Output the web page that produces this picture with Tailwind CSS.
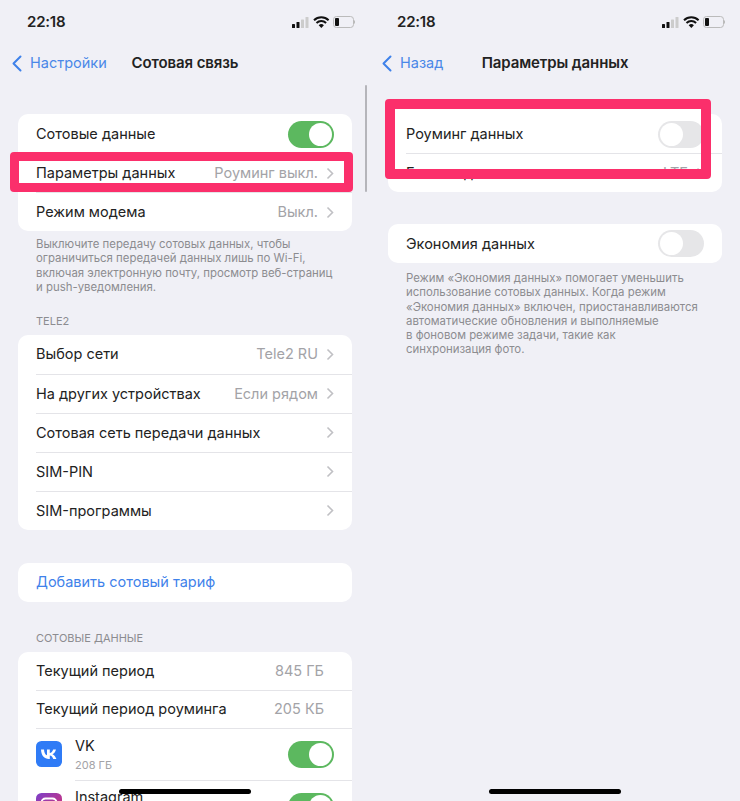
<!DOCTYPE html>
<html lang="ru">
<head>
    <meta charset="UTF-8">
    <meta name="viewport" content="width=device-width, initial-scale=1.0">
    <title>Сотовая связь</title>
    <script src="https://cdn.jsdelivr.net/npm/@tailwindcss/browser@4"></script>
</head>
<body class="bg-[#f0f0f6] font-['Inter','Liberation_Sans',sans-serif] text-[#222] w-[740px] h-[801px] overflow-hidden">
<div class="grid grid-cols-2 h-[801px] overflow-hidden">

    <!-- left phone -->
    <section class="relative h-[801px] overflow-hidden">
        <div class="flex justify-between items-center h-[44px] pl-[27px] pr-[15px]">
            <span class="text-[15px] font-semibold tracking-[-0.2px]">22:18</span>
            <svg width="64" height="14" viewBox="0 0 64 14">
                <rect x="1" y="9" width="3" height="4" rx="0.6" fill="#111"/>
                <rect x="5.5" y="7" width="3" height="6" rx="0.6" fill="#111"/>
                <rect x="10" y="4.5" width="3" height="8.5" rx="0.6" fill="#ccc"/>
                <rect x="14.5" y="2" width="3" height="11" rx="0.6" fill="#ccc"/>
                <path d="M23 5.2a10.5 10.5 0 0 1 14.6 0M25.5 8a7 7 0 0 1 9.6 0" fill="none" stroke="#111" stroke-width="2"/>
                <path d="M27.7 10.3a3.7 3.7 0 0 1 5.2 0L30.3 13z" fill="#111"/>
                <rect x="42.5" y="1.5" width="20" height="11" rx="3" fill="none" stroke="#bbb"/>
                <rect x="44" y="3" width="4" height="8" rx="1" fill="#111"/>
                <path d="M63.5 5.5v3" stroke="#bbb" stroke-width="1.5"/>
            </svg>
        </div>
        <div class="grid grid-cols-[1fr_auto_1fr] items-center h-[36px] pt-[2px]">
            <div class="flex items-center pl-[12px] gap-[8px] text-[14.5px] text-[#4a88e8]">
                <svg width="10" height="17" viewBox="0 0 10 17"><path d="M8.5 1.5 1.5 8.5l7 7" fill="none" stroke="#3f82ea" stroke-width="2" stroke-linecap="round" stroke-linejoin="round"/></svg>
                <span>Настройки</span>
            </div>
            <div class="text-[15px] font-semibold tracking-[-0.1px]">Сотовая связь</div>
            <div></div>
        </div>

        <div class="mt-[34px] mx-[18px] bg-white rounded-[10px]">
            <div class="flex justify-between items-center h-[39px] pl-[18px] pr-[18px] pt-[1px] text-[14.5px]">
                <span>Сотовые данные</span>
                <span class="flex justify-end w-[46px] h-[27px] rounded-full bg-[#5cb85f] p-[2px]"><span class="w-[23px] h-[23px] rounded-full bg-white"></span></span>
            </div>
            <div class="flex justify-between items-center h-[39px] ml-[18px] pr-[18px] border-t border-[#e4e4e8] text-[14.5px]">
                <span>Параметры данных</span>
                <span class="flex items-center gap-[8px] text-[#a3a3a7] text-[14.5px]">Роуминг выкл.
                    <svg width="8" height="13" viewBox="0 0 8 13"><path d="m1.5 1.5 5 5-5 5" fill="none" stroke="#c0c0c4" stroke-width="1.6"/></svg>
                </span>
            </div>
            <div class="flex justify-between items-center h-[39px] ml-[18px] pr-[18px] border-t border-[#e4e4e8] text-[14.5px]">
                <span>Режим модема</span>
                <span class="flex items-center gap-[8px] text-[#a3a3a7] text-[14.5px]">Выкл.
                    <svg width="8" height="13" viewBox="0 0 8 13"><path d="m1.5 1.5 5 5-5 5" fill="none" stroke="#c0c0c4" stroke-width="1.6"/></svg>
                </span>
            </div>
        </div>
        <p class="mt-[6px] mx-[36px] text-[11.4px] leading-[14.4px] text-[#8c8c90]">Выключите передачу сотовых данных, чтобы<br>ограничиться передачей данных лишь по Wi-Fi,<br>включая электронную почту, просмотр веб-страниц<br>и push-уведомления.</p>

        <h3 class="mt-[19px] ml-[36px] text-[11px] leading-[14px] text-[#8c8c90]">TELE2</h3>
        <div class="mt-[7px] mx-[18px] bg-white rounded-[10px]">
            <div class="flex justify-between items-center h-[39px] ml-[18px] pr-[18px] text-[14.5px]">
                <span>Выбор сети</span>
                <span class="flex items-center gap-[8px] text-[#a3a3a7] text-[14.5px]">Tele2 RU
                    <svg width="8" height="13" viewBox="0 0 8 13"><path d="m1.5 1.5 5 5-5 5" fill="none" stroke="#c0c0c4" stroke-width="1.6"/></svg>
                </span>
            </div>
            <div class="flex justify-between items-center h-[39px] ml-[18px] pr-[18px] border-t border-[#e4e4e8] text-[14.5px]">
                <span>На других устройствах</span>
                <span class="flex items-center gap-[8px] text-[#a3a3a7] text-[14.5px]">Если рядом
                    <svg width="8" height="13" viewBox="0 0 8 13"><path d="m1.5 1.5 5 5-5 5" fill="none" stroke="#c0c0c4" stroke-width="1.6"/></svg>
                </span>
            </div>
            <div class="flex justify-between items-center h-[39px] ml-[18px] pr-[18px] border-t border-[#e4e4e8] text-[14.5px]">
                <span>Сотовая сеть передачи данных</span>
                <svg width="8" height="13" viewBox="0 0 8 13"><path d="m1.5 1.5 5 5-5 5" fill="none" stroke="#c0c0c4" stroke-width="1.6"/></svg>
            </div>
            <div class="flex justify-between items-center h-[39px] ml-[18px] pr-[18px] border-t border-[#e4e4e8] text-[14.5px]">
                <span>SIM-PIN</span>
                <svg width="8" height="13" viewBox="0 0 8 13"><path d="m1.5 1.5 5 5-5 5" fill="none" stroke="#c0c0c4" stroke-width="1.6"/></svg>
            </div>
            <div class="flex justify-between items-center h-[39px] ml-[18px] pr-[18px] border-t border-[#e4e4e8] text-[14.5px]">
                <span>SIM-программы</span>
                <svg width="8" height="13" viewBox="0 0 8 13"><path d="m1.5 1.5 5 5-5 5" fill="none" stroke="#c0c0c4" stroke-width="1.6"/></svg>
            </div>
        </div>

        <div class="mt-[33px] mx-[18px] bg-white rounded-[10px] flex items-center h-[39px] pl-[18px] text-[14.5px] text-[#3f82ea]">Добавить сотовый тариф</div>

        <h3 class="mt-[29px] ml-[36px] text-[11px] leading-[14px] text-[#8c8c90]">СОТОВЫЕ ДАННЫЕ</h3>
        <div class="mt-[7px] mx-[18px] bg-white rounded-t-[10px]">
            <div class="flex justify-between items-center h-[38px] ml-[18px] pr-[28px] text-[14.5px]">
                <span>Текущий период</span>
                <span class="text-[#a3a3a7] text-[14.5px]">845 ГБ</span>
            </div>
            <div class="flex justify-between items-center h-[38px] ml-[18px] pr-[28px] border-t border-[#e4e4e8] text-[14.5px]">
                <span>Текущий период роуминга</span>
                <span class="text-[#a3a3a7] text-[14.5px]">205 КБ</span>
            </div>
            <div class="flex items-center h-[52px] ml-[18px] pr-[18px] border-t border-[#e4e4e8]">
                <svg width="26" height="26" viewBox="0 0 26 26" class="shrink-0">
                    <rect width="26" height="26" rx="5.5" fill="#2f7bf6"/>
                    <path d="M5 8.5h3c.2 3.4 1.4 5.300 3 5.800V8.500h2.800v3.500c1.500-.2 2.800-1.600 3.400-3.500H20c-.5 2.200-1.900 4-3.500 4.800 1.700.7 3.100 2.500 3.900 4.700h-3.100c-.6-1.800-1.900-3.200-3.500-3.400V18H13C8.200 18 5.300 14.500 5 8.500z" fill="#fff"/>
                </svg>
                <div class="ml-[13px] flex-1">
                    <div class="text-[14.5px] leading-[18px]">VK</div>
                    <div class="text-[11px] leading-[14px] mt-[3px] text-[#a3a3a7]">208 ГБ</div>
                </div>
                <span class="flex justify-end w-[46px] h-[27px] rounded-full bg-[#5cb85f] p-[2px]"><span class="w-[23px] h-[23px] rounded-full bg-white"></span></span>
            </div>
            <div class="flex items-start h-[52px] ml-[18px] pr-[18px] pt-[8px] relative">
                <span class="absolute left-[39px] right-0 top-0 border-t border-[#e4e4e8]"></span>
                <svg width="26" height="26" viewBox="0 0 26 26" class="shrink-0 mt-[5px]">
                    <defs><linearGradient id="ig" x1="0" y1="0" x2="1" y2="1"><stop offset="0" stop-color="#7b3fc9"/><stop offset="1" stop-color="#e1306c"/></linearGradient></defs>
                    <rect width="26" height="26" rx="5.5" fill="url(#ig)"/>
                    <rect x="5.500" y="5.500" width="15" height="15" rx="4" fill="none" stroke="#fff" stroke-width="1.800"/>
                </svg>
                <div class="ml-[13px] flex-1 text-[14.5px] leading-[18px]">Instagram</div>
                <span class="flex justify-end w-[46px] h-[27px] rounded-full bg-[#5cb85f] p-[2px] mt-[5px]"><span class="w-[23px] h-[23px] rounded-full bg-white"></span></span>
            </div>
        </div>

        <!-- pink highlight -->
        <div class="absolute left-[10px] top-[152px] w-[343px] h-[40px] border-y-[9px] border-x-[9px] border-[#fb2f6b] rounded-[4px]"></div>
        <!-- scrollbar -->
        <div class="absolute left-[365px] top-[85px] w-[2px] h-[107px] bg-[#b5b5ba] rounded-full"></div>
        <!-- home indicator -->
        <div class="absolute left-[119px] top-[789px] w-[132px] h-[5px] bg-black rounded-full"></div>
    </section>

    <!-- right phone -->
    <section class="relative h-[801px] overflow-hidden">
        <div class="flex justify-between items-center h-[44px] pl-[27px] pr-[15px]">
            <span class="text-[15px] font-semibold tracking-[-0.2px]">22:18</span>
            <svg width="64" height="14" viewBox="0 0 64 14">
                <rect x="1" y="9" width="3" height="4" rx="0.6" fill="#111"/>
                <rect x="5.5" y="7" width="3" height="6" rx="0.6" fill="#111"/>
                <rect x="10" y="4.5" width="3" height="8.5" rx="0.6" fill="#ccc"/>
                <rect x="14.5" y="2" width="3" height="11" rx="0.6" fill="#ccc"/>
                <path d="M23 5.2a10.5 10.5 0 0 1 14.6 0M25.5 8a7 7 0 0 1 9.6 0" fill="none" stroke="#111" stroke-width="2"/>
                <path d="M27.7 10.3a3.7 3.7 0 0 1 5.2 0L30.3 13z" fill="#111"/>
                <rect x="42.5" y="1.5" width="20" height="11" rx="3" fill="none" stroke="#bbb"/>
                <rect x="44" y="3" width="4" height="8" rx="1" fill="#111"/>
                <path d="M63.5 5.5v3" stroke="#bbb" stroke-width="1.5"/>
            </svg>
        </div>
        <div class="grid grid-cols-[1fr_auto_1fr] items-center h-[36px] pt-[2px]">
            <div class="flex items-center pl-[12px] gap-[8px] text-[14.5px] text-[#4a88e8]">
                <svg width="10" height="17" viewBox="0 0 10 17"><path d="M8.5 1.5 1.5 8.500l7 7" fill="none" stroke="#3f82ea" stroke-width="2" stroke-linecap="round" stroke-linejoin="round"/></svg>
                <span>Назад</span>
            </div>
            <div class="text-[15px] font-semibold tracking-[-0.1px]">Параметры данных</div>
            <div></div>
        </div>

        <div class="relative mt-[34px] mx-[18px] bg-white rounded-[10px]">
            <div class="absolute top-[-5px] left-[6px] w-[307px] h-[6px] bg-white"></div>
            <div class="relative flex justify-between items-center h-[39px] pl-[18px] pr-[18px] pt-[1px] text-[14.5px]">
                <span>Роуминг данных</span>
                <span class="flex w-[46px] h-[27px] rounded-full bg-[#e6e6e8] p-[2px]"><span class="w-[23px] h-[23px] rounded-full bg-white"></span></span>
            </div>
            <div class="flex justify-between items-center h-[39px] ml-[18px] pr-[18px] border-t border-[#e4e4e8] text-[14.5px]">
                <span>Голос и данные</span>
                <span class="flex items-center gap-[8px] text-[#a3a3a7] text-[14.5px]">LTE
                    <svg width="8" height="13" viewBox="0 0 8 13"><path d="m1.5 1.500 5 5-5 5" fill="none" stroke="#c0c0c4" stroke-width="1.6"/></svg>
                </span>
            </div>
        </div>

        <div class="mt-[32px] mx-[18px] bg-white rounded-[10px] flex justify-between items-center h-[39px] pl-[18px] pr-[18px] text-[14.5px]">
            <span>Экономия данных</span>
            <span class="flex w-[46px] h-[27px] rounded-full bg-[#e6e6e8] p-[2px]"><span class="w-[23px] h-[23px] rounded-full bg-white"></span></span>
        </div>
        <p class="mt-[8px] mx-[36px] text-[11.4px] leading-[14.3px] text-[#8c8c90]">Режим «Экономия данных» помогает уменьшить<br>использование сотовых данных. Когда режим<br>«Экономия данных» включен, приостанавливаются<br>автоматические обновления и выполняемые<br>в фоновом режиме задачи, такие как<br>синхронизация фото.</p>

        <!-- pink highlight -->
        <div class="absolute left-[15px] top-[99px] w-[326px] h-[80px] border-[10px] border-[#fb2f6b] rounded-[4px]"></div>
        <!-- home indicator -->
        <div class="absolute left-[119px] top-[789px] w-[132px] h-[5px] bg-black rounded-full"></div>
    </section>
</div>
</body>
</html>
